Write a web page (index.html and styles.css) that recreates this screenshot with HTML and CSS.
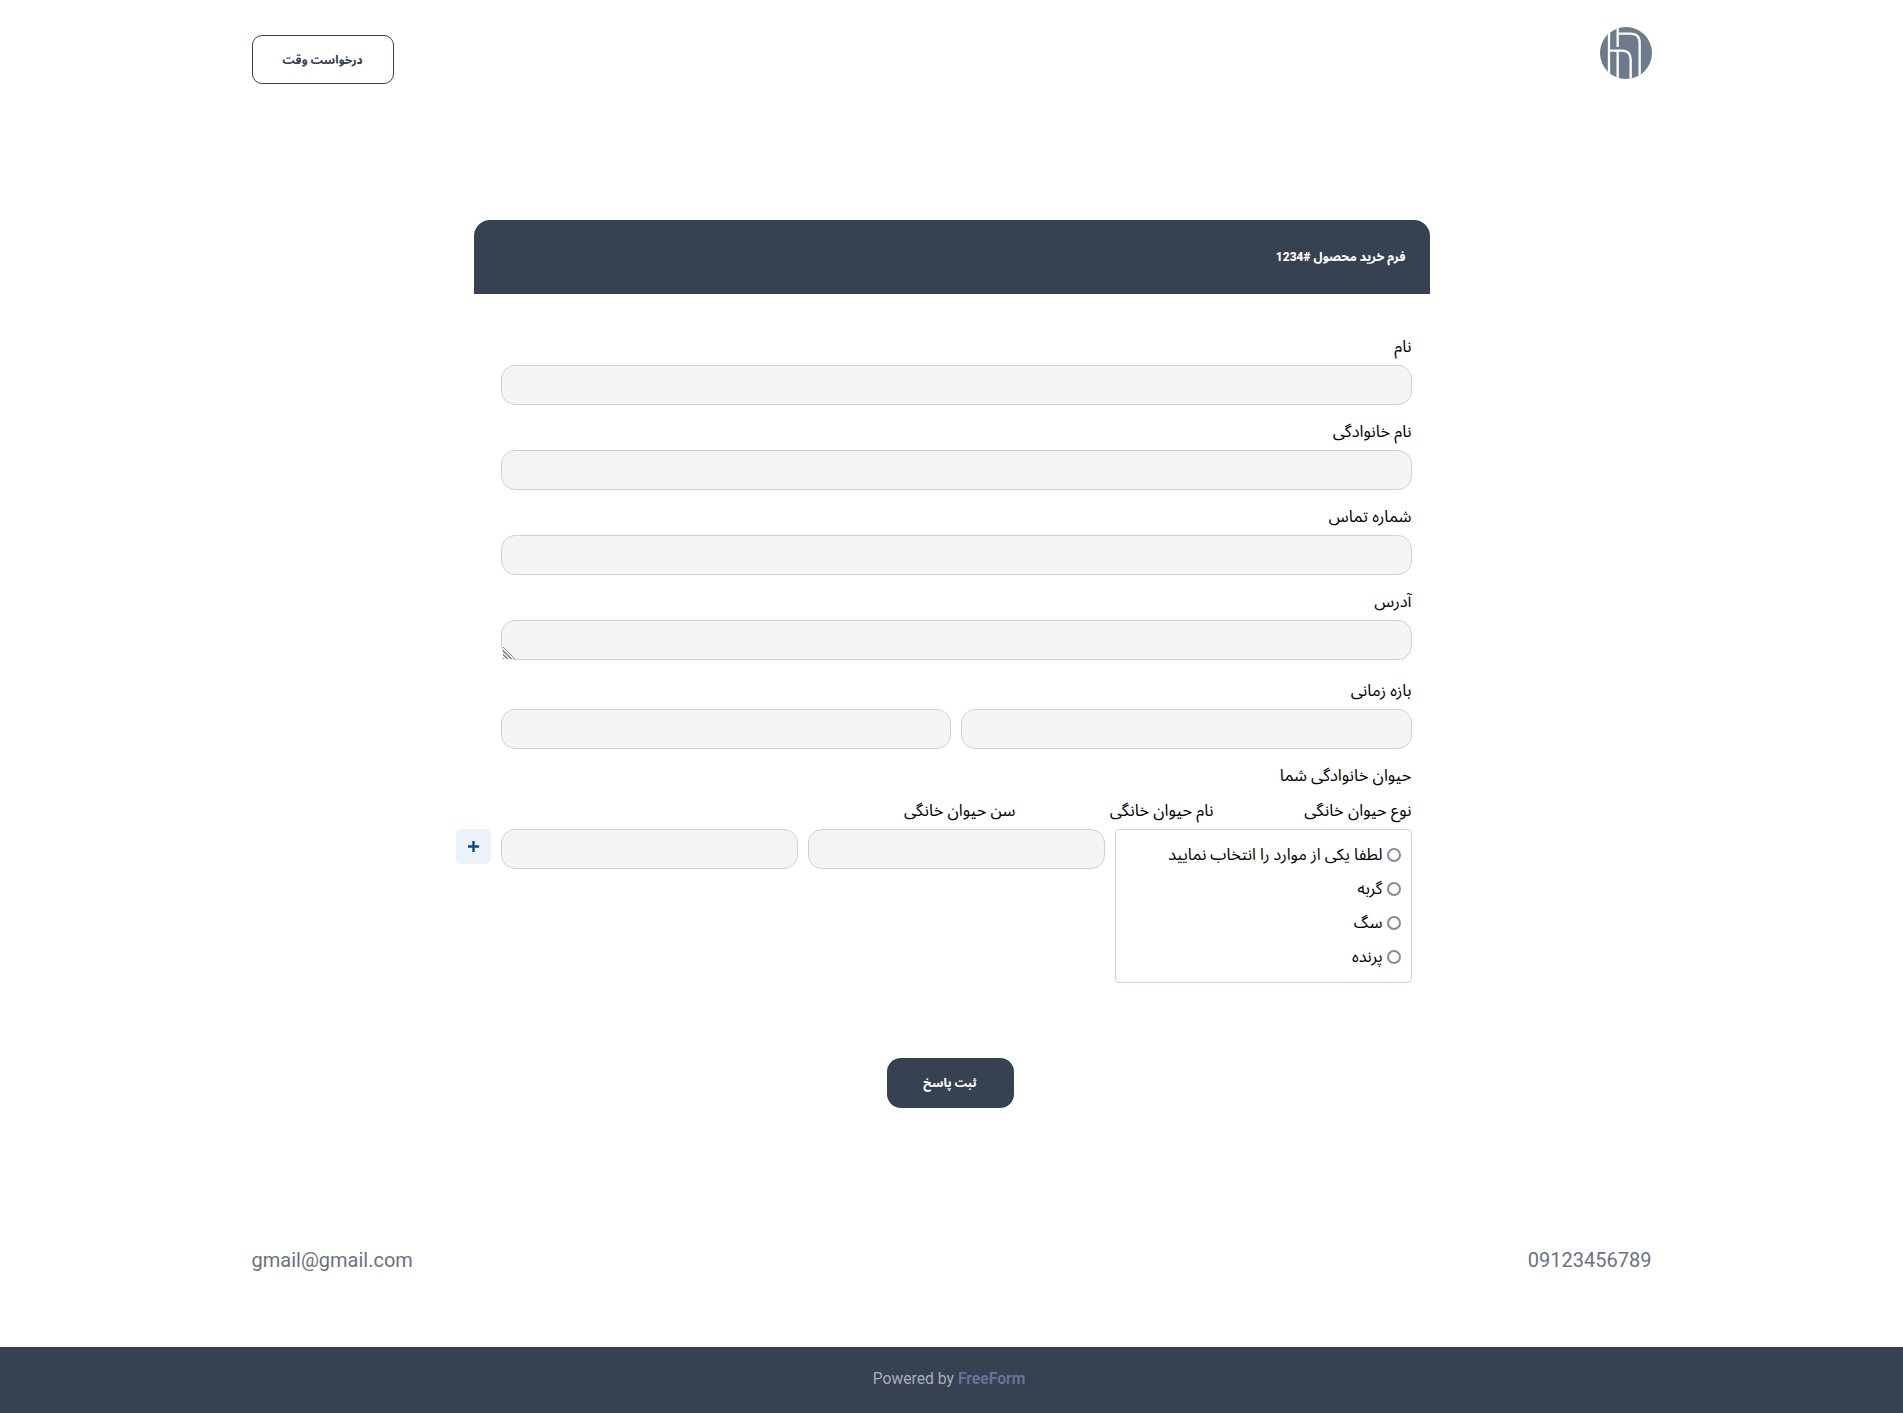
FILE: index.html
```html
<!DOCTYPE html>
<html lang="fa" dir="rtl">
<head>
<meta charset="utf-8">
<title>فرم خرید محصول</title>
<link rel="stylesheet" href="styles.css">
</head>
<body>
<header class="top">
  <svg class="logo" viewBox="119 52 156 156" aria-label="logo">
    <defs><clipPath id="c"><circle cx="197" cy="130" r="78"/></clipPath></defs>
    <circle cx="197" cy="130" r="78" fill="#6e7b8c"/>
    <g clip-path="url(#c)" fill="none" stroke="#fff" stroke-width="7">
      <path d="M146 50V210"/>
      <path d="M172 50V112"/>
      <path d="M172 125V210"/>
      <path d="M146 123H185Q211 123 211 150V210"/>
      <path d="M176 72H210Q238 72 238 100V210"/>
    </g>
  </svg>
  <a class="request" href="#">درخواست وقت</a>
</header>

<main class="card">
  <h1 class="card-title">فرم خرید محصول #1234</h1>
  <form class="form">
    <div class="field">
      <label class="label">نام</label>
      <input class="input" type="text">
    </div>
    <div class="field">
      <label class="label">نام خانوادگی</label>
      <input class="input" type="text">
    </div>
    <div class="field">
      <label class="label">شماره تماس</label>
      <input class="input" type="text">
    </div>
    <div class="field field-area">
      <label class="label">آدرس</label>
      <div class="area-wrap">
        <textarea class="input area"></textarea>
      </div>
    </div>
    <div class="field">
      <label class="label">بازه زمانی</label>
      <div class="range">
        <input class="input" type="text">
        <input class="input" type="text">
      </div>
    </div>
    <div class="pets">
      <div class="label pets-title">حیوان خانوادگی شما</div>
      <div class="pet-labels">
        <span class="label">نوع حیوان خانگی</span>
        <span class="label">نام حیوان خانگی</span>
        <span class="label">سن حیوان خانگی</span>
      </div>
      <div class="pet-row">
        <div class="radios">
          <label class="radio"><span class="dot"></span>لطفا یکی از موارد را انتخاب نمایید</label>
          <label class="radio"><span class="dot"></span>گربه</label>
          <label class="radio"><span class="dot"></span>سگ</label>
          <label class="radio"><span class="dot"></span>پرنده</label>
        </div>
        <input class="input" type="text">
        <input class="input" type="text">
        <button class="add" type="button" aria-label="add">
          <svg viewBox="0 0 14 14" class="plus"><path d="M7 1V13M1 7H13"/></svg>
        </button>
      </div>
    </div>
    <div class="actions"><button class="submit" type="button">ثبت پاسخ</button></div>
  </form>
</main>

<section class="contact">
  <span>09123456789</span>
  <span>gmail@gmail.com</span>
</section>

<footer class="foot" dir="ltr">Powered by <b class="brand">FreeForm</b></footer>
</body>
</html>
```
FILE: styles.css
```css
* { box-sizing: border-box; }
html, body { margin: 0; padding: 0; }
body {
  background: #fff;
  color: #000;
  font-family: "Roboto", "Noto Sans Arabic", sans-serif;
  font-size: 16px;
  height: 1413px;
  display: flex;
  flex-direction: column;
}
.top {
  width: 1400px;
  margin: 0 auto;
  height: 220px;
  display: flex;
  justify-content: space-between;
  align-items: flex-start;
  padding-top: 27px;
}
.logo { width: 52px; height: 52px; display: block; }
.request {
  margin-top: 8px;
  width: 142px;
  height: 49px;
  display: flex;
  align-items: center;
  justify-content: center;
  border: 1px solid #364152;
  border-radius: 10px;
  color: #364152;
  font-size: 11.5px;
  font-weight: 800;
  text-decoration: none;
}
.card { width: 956px; margin: 0 auto; flex: none; }
.card-title {
  margin: 0;
  height: 74px;
  display: flex;
  align-items: center;
  padding: 0 24px;
  background: #364152;
  color: #fff;
  font-size: 12px;
  font-weight: 800;
  border-radius: 16px 16px 0 0;
}
.form { padding: 43px 18px 0 27px; }
.field { display: flex; flex-direction: column; margin-bottom: 17px; }
.field-area { margin-bottom: 21px; }
.label { display: block; height: 28px; line-height: 20px; font-size: 16.5px; color: #000; }
.input {
  display: block;
  width: 100%;
  height: 40px;
  background: #f5f5f5;
  border: 1px solid #d1d1d1;
  border-radius: 14px;
  padding: 0 12px;
  margin: 0;
  outline: none;
}
.area-wrap { position: relative; }
.area { resize: none; }
.area-wrap::after {
  content: "";
  position: absolute;
  left: 2px;
  bottom: 1px;
  width: 15px;
  height: 15px;
  background: repeating-linear-gradient(45deg, #888 0 1.2px, transparent 1.2px 2.6px);
  clip-path: polygon(0 0, 100% 100%, 0 100%);
}
.range { display: grid; grid-template-columns: 1fr 1fr; gap: 10px; }
.pets-title { height: 35px; }
.pet-labels { display: grid; grid-template-columns: repeat(3, 198px); }
.pet-row {
  position: relative;
  display: grid;
  grid-template-columns: repeat(3, 1fr);
  gap: 10px;
  align-items: start;
}
.radios {
  border: 1px solid #cbd5e0;
  border-radius: 4px;
  height: 154px;
  padding: 8px 10px;
  display: flex;
  flex-direction: column;
}
.radio { display: flex; align-items: center; gap: 4px; height: 34px; font-size: 16.3px; }
.dot {
  width: 14px;
  height: 14px;
  flex: none;
  border: 2px solid #8a8a9c;
  border-radius: 50%;
  background: #fff;
}
.add {
  position: absolute;
  left: -45px;
  top: 0;
  width: 35px;
  height: 35px;
  border: 0;
  border-radius: 5px;
  background: #ebf2fa;
  padding: 0;
  display: flex;
  align-items: center;
  justify-content: center;
}
.plus { width: 13px; height: 13px; fill: none; stroke: #0b4a85; stroke-width: 2.6; }
.actions { display: flex; justify-content: center; padding-top: 75px; padding-right: 12px; }
.submit {
  width: 127px;
  height: 50px;
  border: 0;
  border-radius: 14px;
  background: #364152;
  color: #fff;
  font-family: inherit;
  font-size: 11.5px;
  font-weight: 800;
}
.contact {
  width: 1400px;
  margin: 137px auto 0;
  display: flex;
  justify-content: space-between;
  color: #6b7280;
  font-size: 20px;
  line-height: 30px;
}
.foot {
  margin-top: auto;
  height: 66px;
  background: #364152;
  color: #a9aeb6;
  font-size: 15.7px;
  display: flex;
  align-items: center;
  justify-content: center;
  gap: 4px;
  padding: 0 5px 3px 0;
}
.brand { color: #64769b; font-weight: 600; }
```
